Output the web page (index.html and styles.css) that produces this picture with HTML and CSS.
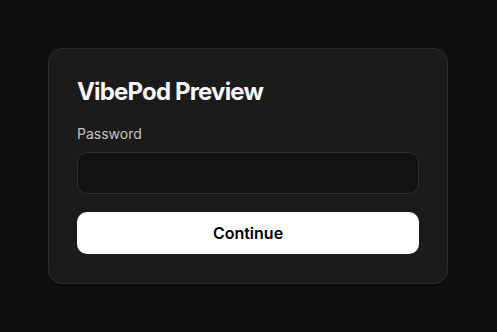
FILE: index.html
```html
<!DOCTYPE html>
<html>
<head>
<meta charset="utf-8">
<link rel="stylesheet" href="styles.css">
</head>
<body>
<form class="card">
  <h1 class="title">VibePod Preview</h1>
  <label class="label" for="pw">Password</label>
  <input class="input" id="pw" type="password">
  <button class="button" type="button">Continue</button>
</form>
</body>
</html>
```
FILE: styles.css
```css
html, body {
  margin: 0;
  height: 100%;
}
body {
  background: #0e0e0e;
  display: flex;
  align-items: center;
  justify-content: center;
  padding-right: 1px;
  box-sizing: border-box;
  font-family: Inter, "Noto Sans", sans-serif;
}
.card {
  width: 400px;
  box-sizing: border-box;
  background: #1b1b1b;
  border: 1px solid #2a2a2a;
  border-radius: 14px;
  padding: 28px 28px 29px;
  display: flex;
  flex-direction: column;
}
.title {
  margin: 0;
  font-size: 24px;
  line-height: 29px;
  font-weight: 700;
  letter-spacing: -0.035em;
  color: #f5f5f5;
}
.label {
  margin-top: 19px;
  font-size: 14px;
  line-height: 17px;
  color: #c4c4c4;
}
.input {
  margin-top: 10px;
  height: 42px;
  box-sizing: border-box;
  background: #121212;
  border: 1px solid #2e2e2e;
  border-radius: 10px;
  outline: none;
}
.button {
  margin-top: 18px;
  height: 42px;
  border: none;
  border-radius: 10px;
  background: #ffffff;
  color: #000;
  font-family: Inter, "Noto Sans", sans-serif;
  font-size: 16px;
  font-weight: 600;
}
```
